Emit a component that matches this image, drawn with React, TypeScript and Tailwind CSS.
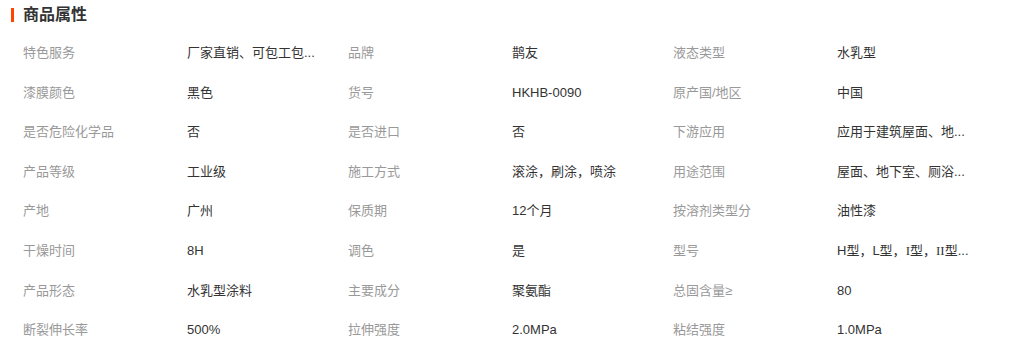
const rows: [string, React.ReactNode][][] = [
  [
    ['特色服务', '厂家直销、可包工包...'],
    ['品牌', '鹊友'],
    ['液态类型', '水乳型'],
  ],
  [
    ['漆膜颜色', '黑色'],
    ['货号', 'HKHB-0090'],
    ['原产国/地区', '中国'],
  ],
  [
    ['是否危险化学品', '否'],
    ['是否进口', '否'],
    ['下游应用', '应用于建筑屋面、地...'],
  ],
  [
    ['产品等级', '工业级'],
    ['施工方式', '滚涂，刷涂，喷涂'],
    ['用途范围', '屋面、地下室、厕浴...'],
  ],
  [
    ['产地', '广州'],
    ['保质期', '12个月'],
    ['按溶剂类型分', '油性漆'],
  ],
  [
    ['干燥时间', '8H'],
    ['调色', '是'],
    [
      '型号',
      <>
        H型，L型，<span className="font-['Liberation_Serif']">I</span>型，
        <span className="font-['Liberation_Serif']">II</span>型...
      </>,
    ],
  ],
  [
    ['产品形态', '水乳型涂料'],
    ['主要成分', '聚氨酯'],
    ['总固含量≥', '80'],
  ],
  [
    ['断裂伸长率', '500%'],
    ['拉伸强度', '2.0MPa'],
    ['粘结强度', '1.0MPa'],
  ],
];

export default function App() {
  return (
    <div
      className="w-[1020px] h-[356px] overflow-hidden bg-white text-[13px]"
      style={{ fontFamily: '"Liberation Sans", "Noto Sans CJK SC", sans-serif' }}
    >
      {/* 标题 */}
      <div className="flex items-center h-[33px] pl-[11px] pb-[3px]">
        <span className="w-[3px] h-[14px] bg-[#ff4400]" />
        <h2 className="ml-[9px] text-[16px] font-bold text-[#333] leading-none">商品属性</h2>
      </div>

      <div className="pl-[23px]">
        {rows.map((row, i) => (
          <div key={i} className="flex items-center h-[39.6px]">
            {row.map(([label, value]) => (
              <div key={label} className="flex items-center w-[325px]">
                <span className="w-[164px] text-[#999] whitespace-nowrap">{label}</span>
                <span className="text-[#333] whitespace-nowrap">{value}</span>
              </div>
            ))}
          </div>
        ))}
      </div>
    </div>
  );
}
